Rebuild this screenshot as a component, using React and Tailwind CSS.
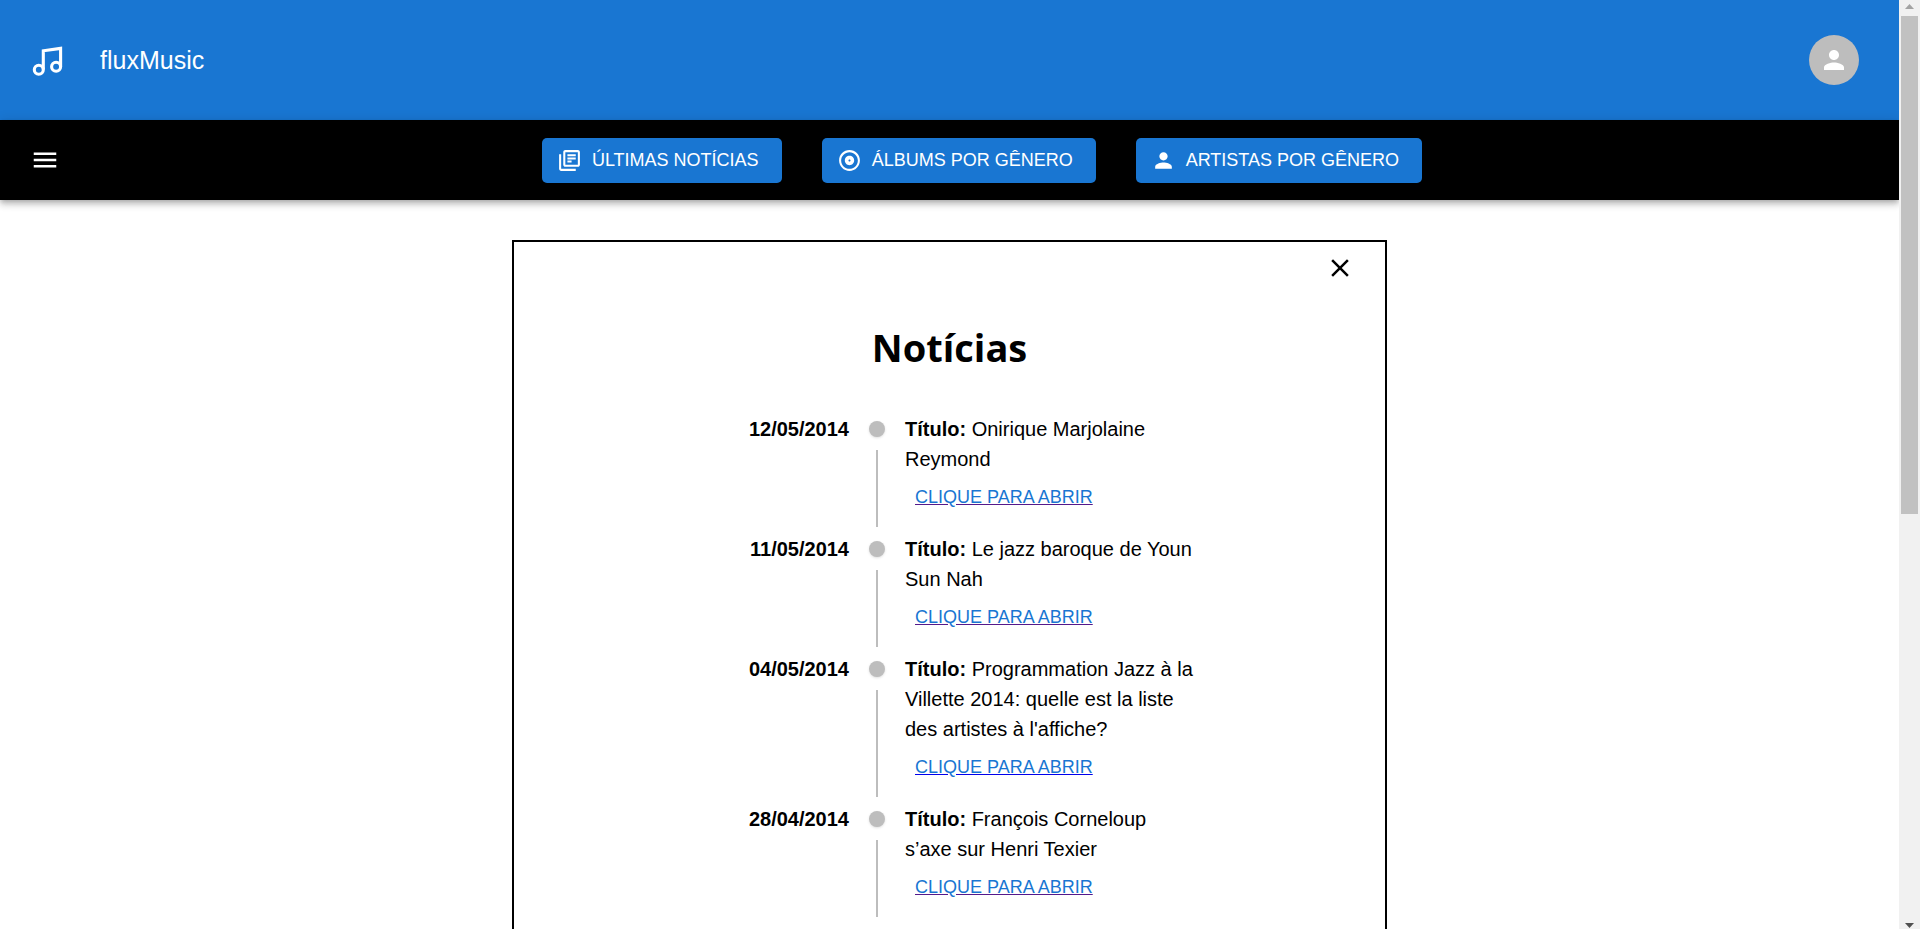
import React from "react";
import { MdOutlineLibraryBooks, MdOutlineAlbum, MdPerson, MdMenu, MdClose } from "react-icons/md";

const navItems = [
  { label: "Últimas notícias", Icon: MdOutlineLibraryBooks },
  { label: "Álbums por gênero", Icon: MdOutlineAlbum },
  { label: "Artistas por gênero", Icon: MdPerson },
];

const news = [
  { date: "12/05/2014", title: "Onirique Marjolaine Reymond", visited: true },
  { date: "11/05/2014", title: "Le jazz baroque de Youn Sun Nah", visited: true },
  { date: "04/05/2014", title: "Programmation Jazz à la Villette 2014: quelle est la liste des artistes à l'affiche?", visited: false },
  { date: "28/04/2014", title: "François Corneloup s’axe sur Henri Texier", visited: true },
];

function MusicLogo() {
  return (
    <svg aria-hidden="true" className="size-[35px]" viewBox="-3 -3.5 35 35" fill="none" stroke="currentColor" strokeWidth="3.1">
      <path d="M10.300 23V4.300L27.600 1.900V20.300" />
      <circle cx="5.800" cy="23.200" r="4.500" />
      <circle cx="23.100" cy="20.300" r="4.500" />
    </svg>
  );
}

function Header() {
  return (
    <header className="flex h-[120px] items-center bg-[#1976d2] pr-10 pl-[30px] text-white">
      <MusicLogo />
      <span className="ml-[35px] text-[25px] leading-10">fluxMusic</span>
      <button type="button" aria-label="Perfil" className="ml-auto flex size-[50px] items-center justify-center rounded-full bg-[#bdbdbd]">
        <MdPerson size={30} />
      </button>
    </header>
  );
}

function NavBar() {
  return (
    <div className="relative flex h-20 items-center bg-black px-[30px] text-white shadow-[0_2px_5px_-1px_rgba(0,0,0,0.2),0_5px_6px_0_rgba(0,0,0,0.14),0_1px_12px_0_rgba(0,0,0,0.12)]">
      <button type="button" aria-label="Menu">
        <MdMenu size={30} />
      </button>
      <nav className="ml-[35px] flex flex-1 justify-center gap-10">
        {navItems.map(({ label, Icon }) => (
          <button key={label} type="button" className="flex h-[45px] items-center gap-[10px] rounded-[5px] bg-[#1976d2] pr-[23px] pl-[15px] text-lg leading-8 whitespace-nowrap uppercase">
            <Icon size={25} />
            {label}
          </button>
        ))}
      </nav>
    </div>
  );
}

function NewsItem({ date, title, visited }) {
  return (
    <li className="grid grid-cols-[1fr_16px_300px] gap-5">
      <time className="pt-[7px] text-right text-xl leading-[30px] font-bold">{date}</time>
      <div className="flex flex-col items-center pt-[14px]">
        <span className="size-4 shrink-0 rounded-full bg-[#bdbdbd] shadow-sm" />
        <span className="mt-[13px] w-[2px] flex-1 bg-[#bdbdbd]" />
      </div>
      <div className="pt-[7px] pr-2 pb-[7px] text-xl leading-[30px]">
        <p>
          <strong>Título:</strong> {title}
        </p>
        <a
          href="#noticia"
          className={`block w-fit px-[10px] py-2 text-lg leading-[30px] text-[#1976d2] uppercase underline ${visited ? "decoration-[#551a8b]" : "decoration-[#0000ee]"}`}
        >
          Clique para abrir
        </a>
      </div>
    </li>
  );
}

function NewsPanel() {
  return (
    <main className="mx-auto mt-10 w-[875px] max-w-full border-2 border-black pb-10">
      <div className="flex justify-end px-[30px] pt-[11px]">
        <button type="button" aria-label="Fechar">
          <MdClose size={30} />
        </button>
      </div>
      <h1 className="mt-9 text-center font-['Open_Sans',sans-serif] text-[38px] leading-[56px] font-bold">Notícias</h1>
      <ul className="mx-auto mt-8 w-[511px] max-w-full">
        {news.map((item) => (
          <NewsItem key={item.date} {...item} />
        ))}
      </ul>
    </main>
  );
}

function ScrollRail() {
  return (
    <div aria-hidden="true" className="flex w-[21px] shrink-0 flex-col items-center bg-[#f1f1f1]">
      <svg className="h-4 w-full shrink-0" viewBox="0 0 21 16">
        <path d="M6 9l4.500-5 4.500 5z" fill="#a3a3a3" />
      </svg>
      <div className="h-[498px] w-[17px] bg-[#c1c1c1]" />
      <svg className="mt-auto h-4 w-full shrink-0" viewBox="0 0 21 16">
        <path d="M6 10l4.500 5 4.500-5z" fill="#505050" />
      </svg>
    </div>
  );
}

export default function App() {
  return (
    <div className="flex h-screen overflow-hidden bg-white font-['Liberation_Sans',Arial,sans-serif] text-black">
      <div className="min-w-0 flex-1 overflow-hidden">
        <Header />
        <NavBar />
        <NewsPanel />
      </div>
      <ScrollRail />
    </div>
  );
}
